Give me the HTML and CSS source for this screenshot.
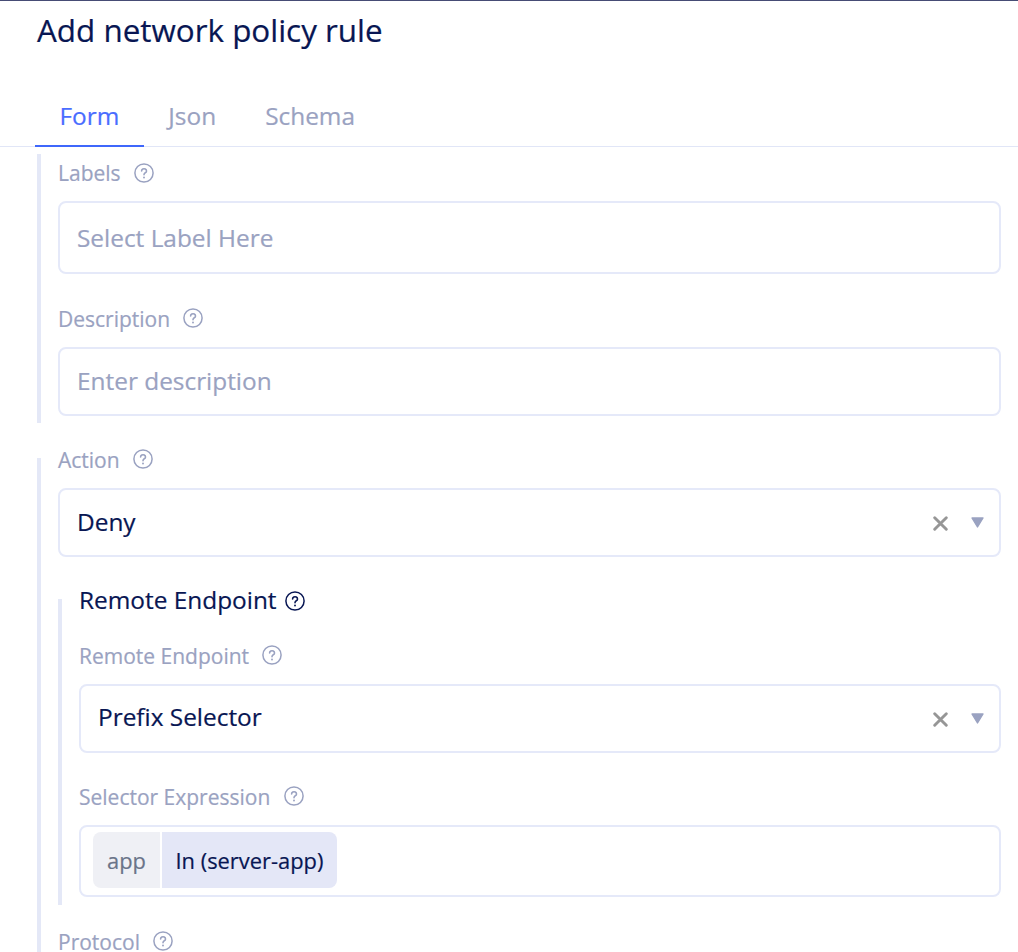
FILE: index.html
```html
<!DOCTYPE html>
<html lang="en">
<head>
<meta charset="utf-8">
<title>Add network policy rule</title>
<link rel="stylesheet" href="styles.css">
</head>
<body>
<svg class="defs" width="0" height="0" aria-hidden="true">
  <symbol id="help" viewBox="0 0 20 20">
    <circle cx="10" cy="10" r="9.1" fill="none" stroke="currentColor" stroke-width="1.5"/>
    <path d="M7.6 7.9a2.45 2.2 0 1 1 3.7 1.9c-.9.55-1.3.9-1.3 2" fill="none" stroke="currentColor" stroke-width="1.6" stroke-linecap="round"/>
    <circle cx="10" cy="14.5" r=".95" fill="currentColor"/>
  </symbol>
  <symbol id="clear" viewBox="0 0 14 14">
    <path d="M1.6 1.6l10.8 10.8M12.4 1.6L1.6 12.4" fill="none" stroke="currentColor" stroke-width="2.7" stroke-linecap="round"/>
  </symbol>
  <symbol id="caret" viewBox="0 0 13 11">
    <path d="M1 1h11L6.5 10z" fill="currentColor" stroke="currentColor" stroke-width="1.4" stroke-linejoin="round"/>
  </symbol>
</svg>
<header class="header"><h1 class="title">Add network policy rule</h1></header>
<nav class="tabs">
  <a class="tab active">Form</a>
  <a class="tab">Json</a>
  <a class="tab">Schema</a>
</nav>
<main class="form">
  <section class="group first">
    <div class="label opening"><span>Labels</span><svg class="help"><use href="#help"/></svg></div>
    <div class="box tall placeholder"><span class="value">Select Label Here</span></div>
    <div class="label next"><span>Description</span><svg class="help"><use href="#help"/></svg></div>
    <div class="box placeholder"><span class="value">Enter description</span></div>
  </section>
  <section class="group second">
    <div class="label lead"><span>Action</span><svg class="help"><use href="#help"/></svg></div>
    <div class="box"><span class="value">Deny</span><svg class="clear"><use href="#clear"/></svg><svg class="caret"><use href="#caret"/></svg></div>
    <section class="group nested">
      <h2 class="label heading"><span>Remote Endpoint</span><svg class="help"><use href="#help"/></svg></h2>
      <div class="label"><span>Remote Endpoint</span><svg class="help"><use href="#help"/></svg></div>
      <div class="box"><span class="value raised">Prefix Selector</span><svg class="clear"><use href="#clear"/></svg><svg class="caret"><use href="#caret"/></svg></div>
      <div class="label after"><span>Selector Expression</span><svg class="help"><use href="#help"/></svg></div>
      <div class="box chips"><span class="chip key">app</span><span class="chip expr">In (server-app)</span></div>
    </section>
    <div class="label protocol"><span>Protocol</span><svg class="help"><use href="#help"/></svg></div>
  </section>
</main>
</body>
</html>
```

FILE: styles.css
```css
* { box-sizing: border-box; }
body {
  margin: 0;
  height: 952px;
  overflow: hidden;
  background: #fff;
  color: #081653;
  font-family: "Open Sans", "Noto Sans", sans-serif;
  -webkit-text-stroke: 0.2px currentColor;
  border-top: 1px solid #464c75;
}
.defs { display: block; }
.header { height: 84px; padding: 7px 37px 0; }
.title { margin: 0; font-size: 31.4px; line-height: 44px; font-weight: 400; }
.tabs {
  display: flex;
  height: 62px;
  padding-left: 35px;
  border-bottom: 1px solid #e1e6f7;
  color: #9aa2c1;
  font-size: 24.4px;
  line-height: 62px;
}
.tab { height: 62px; padding: 0 24.5px; }
.tab.active { color: #4a6dff; border-bottom: 2px solid #3f67fb; }
.form { padding: 7px 17px 0 37px; }
.group { display: flex; flex-direction: column; border-left: 4px solid #e4e8f7; padding-left: 17px; }
.first { height: 269px; padding-top: 9px; }
.second { height: 520px; margin-top: 35px; }
.nested { height: 306px; margin-top: 42px; }
.label {
  display: flex;
  align-items: center;
  flex: none;
  gap: 13.3px;
  height: 20px;
  margin: 0 0 19px;
  color: #9aa2c1;
  font-size: 21px;
  font-weight: 400;
  line-height: 20px;
}
.label span { padding-top: 2px; }
.help { width: 20px; height: 20px; flex: none; }
.opening { margin-bottom: 18px; }
.opening span { padding-top: 0; }
.lead { margin-top: -9px; }
.next { margin-top: 34px; }
.heading { gap: 8.5px; margin: -8px 0 34px; font-size: 24.4px; color: #081653; }
.heading span { padding: 0 0 2px; }
.after { margin-top: 33px; }
.protocol { margin-top: 26px; }
.box {
  display: flex;
  align-items: center;
  flex: none;
  height: 69px;
  padding: 0 15px 0 17px;
  border: 2px solid #e5e9f9;
  border-radius: 8px;
  font-size: 24.4px;
  line-height: 34px;
}
.tall { height: 73px; }
.placeholder { color: #9aa2c1; }
.value { flex: 1; padding-bottom: 1px; }
.value.raised { padding-bottom: 3px; }
.tall .value { padding: 1px 0 0; }
.clear { width: 15px; height: 15px; margin: 1px 23px 0 0; color: #969696; }
.caret { width: 13px; height: 11px; color: #9aa2c1; }
.chips { height: 72px; padding: 0 12px 2px; gap: 2px; font-size: 21.9px; }
.chip { height: 56px; line-height: 58px; padding: 0 14px; }
.key { background: #eff0f5; color: #6a7489; border-radius: 8px 0 0 8px; }
.expr { background: #e4e7f7; border-radius: 0 8px 8px 0; padding: 0 14px 0 13.5px; }
```
